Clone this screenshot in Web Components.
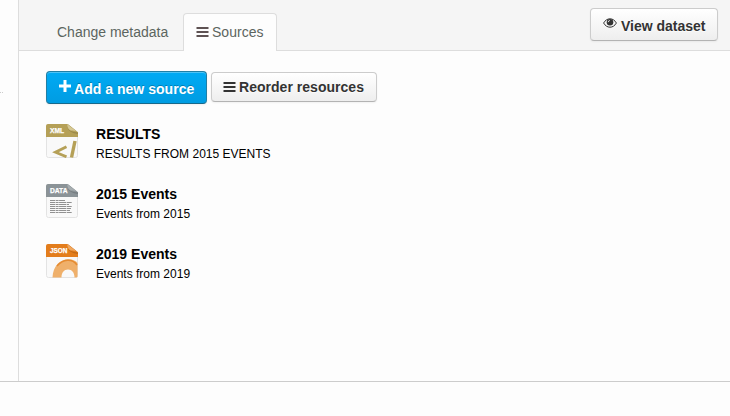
<!DOCTYPE html>
<html lang="en">
<head>
<meta charset="utf-8">
<title>Sources</title>
<style>
body{margin:0;background:#fdfdfd;font-family:"Liberation Sans",Arial,sans-serif;overflow:hidden}
</style>
</head>
<body>
<dataset-page></dataset-page>
<script>
const define = (name, html, init) => customElements.define(name, class extends HTMLElement {
  constructor() {
    super();
    this.attachShadow({mode: 'open'});
  }
  connectedCallback() {
    this.shadowRoot.innerHTML = html;
    if (init) init(this, this.shadowRoot);
  }
});

const glyphs = {
  bars: '<svg width="13" height="11" viewBox="0 0 13 11"><path fill="currentColor" d="M.5 0h12v2h-12zM.5 4h12v2h-12zM.5 8h12v2h-12z"/></svg>',
  plus: '<svg width="12" height="12" viewBox="0 0 12 12"><path fill="currentColor" d="M4.500 0h3v4.500H12v3H7.500V12h-3V7.500H0v-3h4.500z"/></svg>',
  eye: '<svg width="14" height="10" viewBox="0 0 14 10"><path fill="none" stroke="currentColor" stroke-width="1" d="M.6 5C2.200 2.200 4.500.8 7 .8S11.800 2.200 13.400 5C11.800 7.800 9.500 9.200 7 9.200S2.200 7.800.6 5z"/><circle cx="7" cy="4.300" r="3.300" fill="currentColor"/><path fill="none" stroke="#eee" stroke-width=".9" d="M5.200 4.200Q5.300 2.600 6.900 2.500"/></svg>'
};

define('ui-glyph', `<style>:host{display:block;flex:none}svg{display:block}</style><span></span>`,
  (el, root) => root.querySelector('span').innerHTML = glyphs[el.getAttribute('name')]);

define('ui-button', `<style>
:host{display:flex;box-sizing:border-box;align-items:center;border:1px solid #ccc;border-bottom-color:#b3b3b3;border-radius:4px;
background:linear-gradient(#fff,#eee);color:#333;font-weight:bold;font-size:14px;line-height:20px;white-space:nowrap;
box-shadow:inset 0 1px 0 rgba(255,255,255,.3),0 1px 2px rgba(0,0,0,.05);text-shadow:0 1px 1px rgba(255,255,255,.75)}
:host([primary]){color:#fff;background:linear-gradient(#00aaf4,#009ce2);border-color:#217fa5;border-bottom-color:#17698b;text-shadow:0 -1px 0 rgba(0,0,0,.25)}
</style><slot></slot>`);

define('ui-tab', `<style>
:host{display:flex;box-sizing:border-box;align-items:center;height:38px;font-size:14px;line-height:20px;color:#5c655f;white-space:nowrap}
:host([active]){border:1px solid #ddd;border-bottom:0;border-radius:4px 4px 0 0;background:#fdfdfd}
</style><slot></slot>`);

const marks = {
  XML: ['#b5a057', '#d5c894', '<path fill="none" stroke="#b5a057" stroke-width="2.800" d="M20.500 22.800L9.500 28.200L20.500 32.800"/><path fill="none" stroke="#b5a057" stroke-width="3.400" d="M29 17L25.500 33.500"/>'],
  DATA: ['#8b9397', '#a6adb0', '<path stroke="#555" stroke-width=".9" stroke-dasharray="5 .6 3 .5 7 .6" d="M4 16.500h15M4 18.500h22M4 20.500h19M4 22.500h22M4 24.500h21M4 26.500h20M4 28.500h22" opacity=".7"/>'],
  JSON: ['#e37d1c', '#f0a860', '<path fill="#efb06b" d="M6.500 33.500C7 22 14 15.200 22.500 15.200C27 15.200 30 17 31.500 19V33.500H28.500C28.500 28.500 26 25.500 22 25.500C18 25.500 15.500 28.500 15.500 33.500z"/><path fill="none" stroke="#e58b32" stroke-width="1.500" d="M11 22C17 15 26 14 31 21"/>']
};
define('file-icon', `<style>:host{display:block;width:32px;height:34px;flex:none}svg{display:block}</style><div></div>`, (el, root) => {
  const type = el.getAttribute('type'), [main, fold, body] = marks[type];
  root.querySelector('div').innerHTML = `<svg width="32" height="34" viewBox="0 0 32 34">
<defs><clipPath id="c"><path d="M2 0H22L32 8V32Q32 34 30 34H2Q0 34 0 32V2Q0 0 2 0z"/></clipPath></defs>
<path d="M2.500 .5H22L31.500 8V31.500Q31.500 33.500 29.500 33.500H2.500Q.5 33.500 .5 31.500V2.500Q.5 .5 2.500 .5z" fill="#f9f9f9" stroke="#e3e3e3"/>
<g clip-path="url(#c)"><path d="M0 0H22L32 8V13H0z" fill="${main}"/>${body}</g>
<path d="M21 0Q22 6 25 6.500Q29 6 32 8.500z" fill="${fold}"/><path d="M21 3Q23 8 32 8.500V10Q23 9 21 3z" fill="#000" opacity=".15"/>
<text x="4" y="9.300" fill="#fff" stroke="#fff" stroke-width=".25" font-family="Liberation Sans" font-weight="bold" font-size="7" textLength="${type === 'XML' ? 14 : 17.5}" lengthAdjust="spacingAndGlyphs">${type}</text></svg>`;
});

define('source-item', `<style>
:host{display:flex;height:60px;gap:18px;color:#000}
.copy{display:flex;flex-direction:column;white-space:nowrap}
.title{font-size:14px;line-height:20px;font-weight:bold}
.desc{font-size:12px;line-height:21px}
</style><div class="copy"><div class="title"><slot name="title"></slot></div><div class="desc"><slot></slot></div></div>`,
  (el, root) => {
    const icon = document.createElement('file-icon');
    icon.setAttribute('type', el.getAttribute('type'));
    root.insertBefore(icon, root.querySelector('.copy'));
  });

define('dataset-page', `<style>
:host{display:flex;flex-direction:column;height:416px}
.frame{display:flex;box-sizing:border-box;height:382px;border-bottom:1px solid #ccc}
.aside{width:18px;padding-top:92px;box-sizing:border-box}
.aside i{display:block;width:3px;height:1px;background:linear-gradient(90deg,#ccc 1px,transparent 1px 2px,#ccc 2px)}
main{flex:1;border-left:1px solid #ddd}
header{display:flex;box-sizing:border-box;height:51px;border-bottom:1px solid #ddd;background:#f5f5f5;padding-left:38px;align-items:flex-end}
.plain{width:126px;padding-top:2px}
.active{width:94px;padding-left:12px;gap:3px;margin-bottom:-1px}
.active span{margin-top:-1px}
.active ui-glyph{color:#5e5253}
.view{width:128px;height:33px;margin:0 12px 9px auto;padding-left:12px;gap:4px}
.view ui-glyph{margin-top:-3px}.view span{margin-top:3px}
.actions{display:flex;align-items:center;gap:4px;padding:20px 0 0 27px}
.add{width:161px;height:33px;padding-left:12px;gap:3px}
.add ui-glyph{margin-top:-4px}.add span{margin-top:3px}
.reorder{width:166px;height:30px;padding-left:11px;gap:3px;margin-top:-1px}
.list{display:flex;flex-direction:column;padding:20px 0 0 27px}
</style>
<div class="frame"><div class="aside"><i></i></div><main>
<header><ui-tab class="plain"><span>Change metadata</span></ui-tab><ui-tab class="active" active><ui-glyph name="bars"></ui-glyph><span>Sources</span></ui-tab>
<ui-button class="view"><ui-glyph name="eye"></ui-glyph><span>View dataset</span></ui-button></header>
<div class="actions"><ui-button class="add" primary><ui-glyph name="plus"></ui-glyph><span>Add a new source</span></ui-button><ui-button class="reorder"><ui-glyph name="bars"></ui-glyph><span>Reorder resources</span></ui-button></div>
<div class="list">
<source-item type="XML"><span slot="title">RESULTS</span>RESULTS FROM 2015 EVENTS</source-item>
<source-item type="DATA"><span slot="title">2015 Events</span>Events from 2015</source-item>
<source-item type="JSON"><span slot="title">2019 Events</span>Events from 2019</source-item>
</div></main></div>`,
  (el, root) => {
    const fit = (node, width) => {
      node.style.letterSpacing = '0px';
      const n = node.textContent.length;
      node.style.letterSpacing = ((width - node.getBoundingClientRect().width) / n) + 'px';
    };
    const widths = {'Change metadata': 111.3, 'Sources': 51.5, 'View dataset': 84.5, 'Add a new source': 120.3, 'Reorder resources': 125, 'RESULTS': 64.5, '2015 Events': 81, '2019 Events': 81};
    root.querySelectorAll('span').forEach(s => widths[s.textContent] && fit(s, widths[s.textContent]));
  });
</script>
</body>
</html>
